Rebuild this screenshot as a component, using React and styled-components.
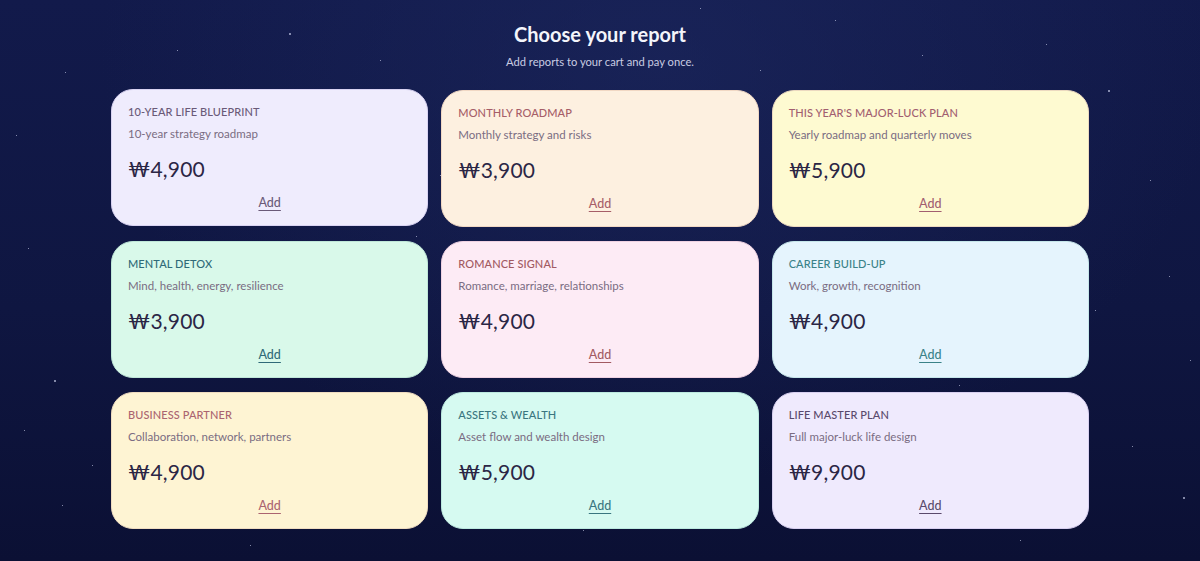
import React from 'react';
import styled, { createGlobalStyle } from 'styled-components';

const reports = [
  { title: '10-Year Life Blueprint', sub: '10-year strategy roadmap', price: '₩4,900', bg: '#efecfd', line: '#d9d3f2', ink: '#6a5a78' },
  { title: 'Monthly Roadmap', sub: 'Monthly strategy and risks', price: '₩3,900', bg: '#fdf0e0', line: '#f1d8c4', ink: '#a65e68' },
  { title: "This Year's Major-Luck Plan", sub: 'Yearly roadmap and quarterly moves', price: '₩5,900', bg: '#fefad1', line: '#ecd9c0', ink: '#a25e70' },
  { title: 'Mental Detox', sub: 'Mind, health, energy, resilience', price: '₩3,900', bg: '#d9f9ea', line: '#bfe7d8', ink: '#2f6a78' },
  { title: 'Romance Signal', sub: 'Romance, marriage, relationships', price: '₩4,900', bg: '#fdebf5', line: '#efd2e2', ink: '#a25a62' },
  { title: 'Career Build-Up', sub: 'Work, growth, recognition', price: '₩4,900', bg: '#e5f4fd', line: '#c6e6ea', ink: '#3a8288' },
  { title: 'Business Partner', sub: 'Collaboration, network, partners', price: '₩4,900', bg: '#fef4d3', line: '#efdcc0', ink: '#ab6470' },
  { title: 'Assets & Wealth', sub: 'Asset flow and wealth design', price: '₩5,900', bg: '#d6faf1', line: '#bce9df', ink: '#3a7680' },
  { title: 'Life Master Plan', sub: 'Full major-luck life design', price: '₩9,900', bg: '#efeafd', line: '#d8d0f0', ink: '#5a4a6c' },
];

const stars = [
  [289, 33, 2], [177, 50, 1], [65, 72, 1], [16, 135, 1], [28, 248, 1],
  [1108, 90, 2], [1046, 44, 1], [922, 55, 1], [1169, 276, 1], [1095, 310, 1],
  [959, 385, 1], [1132, 446, 1], [1183, 497, 2], [440, 175, 1], [416, 236, 1],
  [583, 530, 1], [54, 380, 2], [24, 430, 1], [92, 465, 1], [62, 505, 1],
  [700, 8, 1], [835, 20, 1], [380, 60, 1], [1150, 180, 1], [1020, 540, 1],
  [250, 545, 1], [1190, 360, 1], [760, 70, 1],
];

const GlobalStyle = createGlobalStyle`
  html, body {
    margin: 0;
    padding: 0;
    background: #0d1438;
  }
  body {
    font-family: Lato, "Noto Sans", sans-serif;
    -webkit-font-smoothing: antialiased;
  }
`;

const Page = styled.main`
  position: relative;
  min-height: 561px;
  box-sizing: border-box;
  padding: 20px 0 32px;
  overflow: hidden;
  background:
    radial-gradient(ellipse at 55% 10%, rgba(30, 42, 98, 0.55), transparent 60%),
    linear-gradient(180deg, #121a4b 0%, #0f1641 55%, #0b1034 100%);
`;

const Star = styled.span`
  position: absolute;
  border-radius: 50%;
  background: rgba(225, 230, 255, 0.75);
`;

const Header = styled.header`
  position: relative;
  text-align: center;
`;

const Title = styled.h1`
  margin: 0;
  font-size: 20px;
  line-height: 28px;
  font-weight: 700;
  color: #f4f5fb;
`;

const Lead = styled.p`
  margin: 6px 0 0;
  font-size: 11.2px;
  line-height: 16px;
  color: #c9cce2;
`;

const Grid = styled.section`
  position: relative;
  width: 978px;
  margin: 20px auto 0;
  display: grid;
  grid-template-columns: repeat(3, 1fr);
  column-gap: 13px;
  row-gap: 14px;
`;

const Card = styled.article`
  height: 137px;
  box-sizing: border-box;
  padding: 15px 16px 0;
  display: flex;
  flex-direction: column;
  border-radius: 22px;
  background: ${p => p.$bg};
  border: 1px solid ${p => p.$line};
  transform: ${p => (p.$raised ? 'translateY(-1px)' : 'none')};
`;

const Name = styled.h2`
  margin: 0;
  font-size: 11px;
  line-height: 14px;
  font-weight: 500;
  letter-spacing: 0.1px;
  text-transform: uppercase;
  color: ${p => p.$ink};
`;

const Sub = styled.p`
  margin: 7px 0 0;
  font-size: 11.5px;
  line-height: 16px;
  color: #7a6c82;
`;

const Price = styled.div`
  margin-top: 13px;
  font-size: 21px;
  line-height: 28px;
  font-weight: 400;
  color: #2b2645;
  letter-spacing: 0.2px;
`;

const Add = styled.button`
  align-self: center;
  margin-top: 12px;
  padding: 0;
  border: none;
  background: none;
  font-family: inherit;
  font-size: 12.5px;
  line-height: 16px;
  font-weight: 500;
  color: ${p => p.$ink};
  text-decoration: underline;
  text-underline-offset: 3px;
  text-decoration-thickness: 1px;
  cursor: pointer;
`;

export default function App() {
  return (
    <>
      <GlobalStyle />
      <Page>
        {stars.map(([x, y, s], i) => (
          <Star key={i} style={{ left: x, top: y, width: s, height: s }} />
        ))}
        <Header>
          <Title>Choose your report</Title>
          <Lead>Add reports to your cart and pay once.</Lead>
        </Header>
        <Grid>
          {reports.map((r, i) => (
            <Card key={r.title} $bg={r.bg} $line={r.line} $raised={i === 0}>
              <Name $ink={r.ink}>{r.title}</Name>
              <Sub>{r.sub}</Sub>
              <Price>{r.price}</Price>
              <Add $ink={r.ink}>Add</Add>
            </Card>
          ))}
        </Grid>
      </Page>
    </>
  );
}
